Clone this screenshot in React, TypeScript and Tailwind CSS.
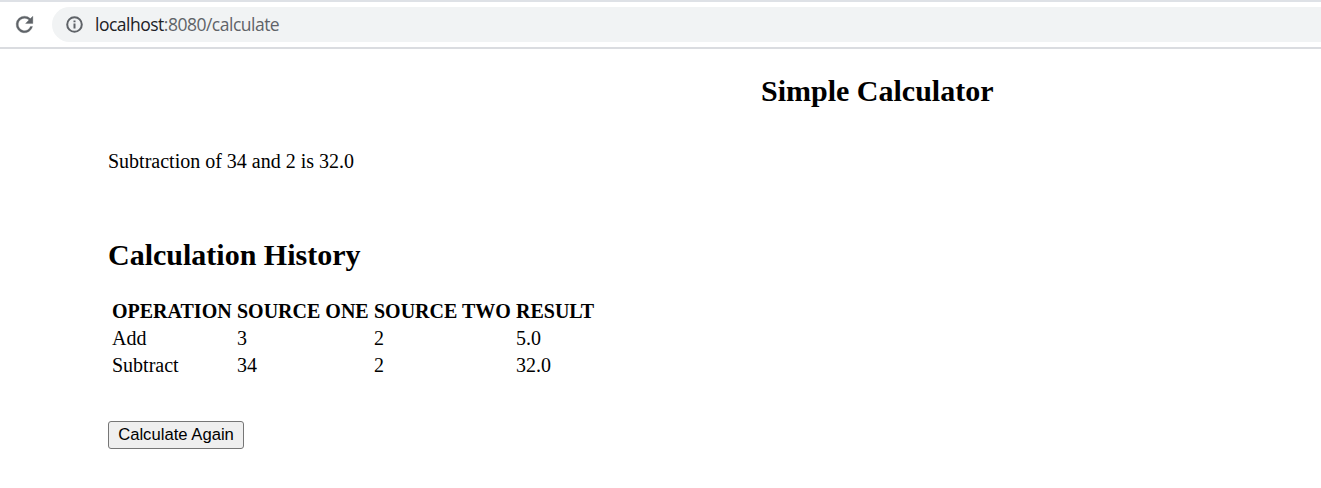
export default function App() {
  const rows = [
    ["Add", "3", "2", "5.0"],
    ["Subtract", "34", "2", "32.0"],
  ];
  return (
    <div className="h-[488px] w-[1321px] overflow-hidden bg-white font-['Liberation_Serif',serif] text-black">
      <header className="flex h-[49px] items-center border-t-2 border-b-2 border-t-[#dee1e6] border-b-[#dadce0] pl-[12px]">
        <svg width="25" height="25" viewBox="0 0 24 24" fill="#5f6368" stroke="#5f6368" strokeWidth="0.3">
          <path d="M17.65 6.35A7.96 7.96 0 0 0 12 4a8 8 0 1 0 7.73 10h-2.08A6 6 0 1 1 12 6c1.66 0 3.14.69 4.22 1.78L13 11h7V4z" />
        </svg>
        <div className="ml-[15px] flex h-[35px] flex-1 items-center rounded-l-full bg-[#f1f3f4] pl-[14px]">
          <svg width="17" height="17" viewBox="0 0 17 17" fill="none" stroke="#5f6368" strokeWidth="2">
            <circle cx="8.5" cy="8.5" r="7.3" />
            <path d="M8.5 7.5v5M8.5 4.4v1.8" />
          </svg>
          <span className="ml-3 font-['Open_Sans',sans-serif] text-[17.5px] tracking-[-0.5px] text-[#5f6368]">
            <span className="text-[#202124]">localhost</span>:8080/calculate
          </span>
        </div>
      </header>
      <main className="pl-[108px] text-[20px] leading-[23px]">
        <h2 className="pt-[25px] pl-[653px] text-[30px] leading-[34px] font-bold">Simple Calculator</h2>
        <p className="mt-[42px]">Subtraction of 34 and 2 is 32.0</p>
        <h2 className="mt-[65px] text-[30px] leading-[34px] font-bold">Calculation History</h2>
        <table className="mt-[25px] w-[489px] table-fixed border-separate border-spacing-x-[3px] border-spacing-y-[2px] text-left">
          <colgroup>
            <col className="w-[122px]" />
            <col className="w-[134px]" />
            <col className="w-[139px]" />
            <col className="w-[79px]" />
          </colgroup>
          <thead>
            <tr>
              {["OPERATION", "SOURCE ONE", "SOURCE TWO", "RESULT"].map((h) => (
                <th key={h} className="p-[1px] whitespace-nowrap">{h}</th>
              ))}
            </tr>
          </thead>
          <tbody>
            {rows.map((r) => (
              <tr key={r[0]}>{r.map((c, i) => <td key={i} className="p-[1px]">{c}</td>)}</tr>
            ))}
          </tbody>
        </table>
        <button className="mt-[41px] flex h-[28px] w-[136px] items-center justify-center rounded-[3px] border border-[#767676] bg-[#efefef] pb-[2px] font-['Liberation_Sans',sans-serif] text-[16.67px] whitespace-nowrap">Calculate Again</button>
      </main>
    </div>
  );
}
